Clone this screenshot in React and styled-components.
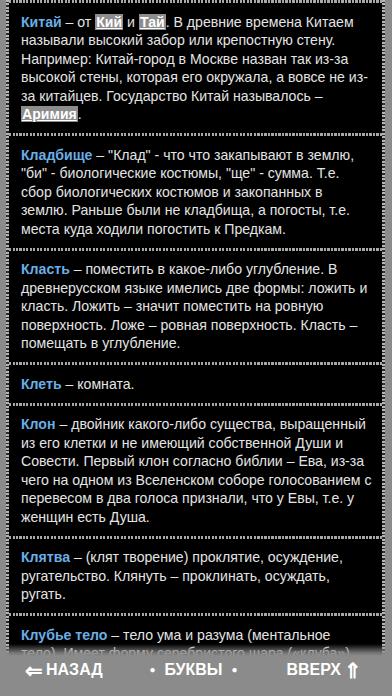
import React from "react";
import styled, { createGlobalStyle } from "styled-components";

const Global = createGlobalStyle`
  html, body { margin: 0; padding: 0; background: #8b8b8b; }
  body { font-family: "Liberation Sans", Arial, sans-serif; }
`;

const Page = styled.div`
  width: 392px;
  height: 696px;
  overflow: hidden;
  background: #8b8b8b;
  position: relative;
`;

const Panel = styled.div`
  margin: 0 7px 0 6px;
  padding: 0 3px;
  background:
    repeating-linear-gradient(180deg, #b5b5b5 0 2px, #2a2a2a 2px 3.5px) left top / 3px 100% no-repeat,
    repeating-linear-gradient(180deg, #b5b5b5 0 2px, #2a2a2a 2px 3.5px) right top / 3px 100% no-repeat,
    #000;
`;

const Separator = styled.div`
  height: 3px;
  background: repeating-linear-gradient(90deg, #a8a8a8 0 2px, #000 2px 3.5px);
`;

const Entry = styled.p`
  margin: 0;
  padding: 9.5px 10px 9.5px 12px;
  color: #e4e4e4;
  font-size: 14.1px;
  line-height: 18.5px;
`;

const Term = styled.b`
  color: #6aaee6;
  font-weight: bold;
`;

const Mark = styled.b`
  background: #8d8d8d;
  color: #fff;
  text-decoration: underline;
  font-weight: bold;
  padding: 0 1px;
`;

const BottomBar = styled.nav`
  position: absolute;
  left: 0;
  right: 0;
  bottom: 0;
  height: 52px;
  box-sizing: border-box;
  padding: 12px 30px 12px 25px;
  background: linear-gradient(180deg, rgba(139,139,139,0) 0px, rgba(139,139,139,0.85) 9px, #8b8b8b 12px);
  display: grid;
  grid-template-columns: 1fr auto 1fr;
  align-items: center;
`;

const NavItem = styled.span`
  color: #fff;
  font-weight: bold;
  font-size: 16px;
  line-height: 22px;
  display: flex;
  align-items: center;
  gap: 3px;
  justify-self: ${(p) => p.$align || "center"};
`;

const Arrow = styled.span`
  font-weight: bold;
  font-size: 21px;
  line-height: 1;
`;

const Dot = styled.span`
  font-size: 10px;
  margin: 0 6px;
`;

const entries = [
  <>
    <Term>Китай</Term> – от <Mark>Кий</Mark> и <Mark>Тай</Mark>. В древние времена Китаем
    называли высокий забор или крепостную стену. Например: Китай-город в Москве назван так
    из-за высокой стены, которая его окружала, а вовсе не из-за китайцев. Государство Китай
    называлось – <Mark>Аримия</Mark>.
  </>,
  <>
    <Term>Кладбище</Term> – "Клад" - что что закапывают в землю, "би" - биологические костюмы,
    "ще" - сумма. Т.е. сбор биологических костюмов и закопанных в землю. Раньше были не
    кладбища, а погосты, т.е. места куда ходили погостить к Предкам.
  </>,
  <>
    <Term>Класть</Term> – поместить в какое-либо углубление. В древнерусском языке имелись две
    формы: ложить и класть. Ложить – значит поместить на ровную поверхность. Ложе – ровная
    поверхность. Класть – помещать в углубление.
  </>,
  <>
    <Term>Клеть</Term> – комната.
  </>,
  <>
    <Term>Клон</Term> – двойник какого-либо существа, выращенный из его клетки и не имеющий
    собственной Души и Совести. Первый клон согласно библии – Ева, из-за чего на одном из
    Вселенском соборе голосованием с перевесом в два голоса признали, что у Евы, т.е. у женщин
    есть Душа.
  </>,
  <>
    <Term>Клятва</Term> – (клят творение) проклятие, осуждение, ругательство. Клянуть –
    проклинать, осуждать, ругать.
  </>,
  <>
    <Term>Клубье тело</Term> – тело ума и разума (ментальное тело). Имеет форму серебристого
    шара («клуба»). Находится вокруг головы человека.
  </>,
];

export default function App() {
  return (
    <>
      <Global />
      <Page>
        <Panel>
          {entries.map((content, i) => (
            <React.Fragment key={i}>
              <Separator />
              <Entry>{content}</Entry>
            </React.Fragment>
          ))}
        </Panel>
        <BottomBar>
          <NavItem $align="start">
            <Arrow>⇐</Arrow>НАЗАД
          </NavItem>
          <NavItem>
            <Dot>●</Dot>БУКВЫ<Dot>●</Dot>
          </NavItem>
          <NavItem $align="end">
            ВВЕРХ<Arrow>⇑</Arrow>
          </NavItem>
        </BottomBar>
      </Page>
    </>
  );
}
